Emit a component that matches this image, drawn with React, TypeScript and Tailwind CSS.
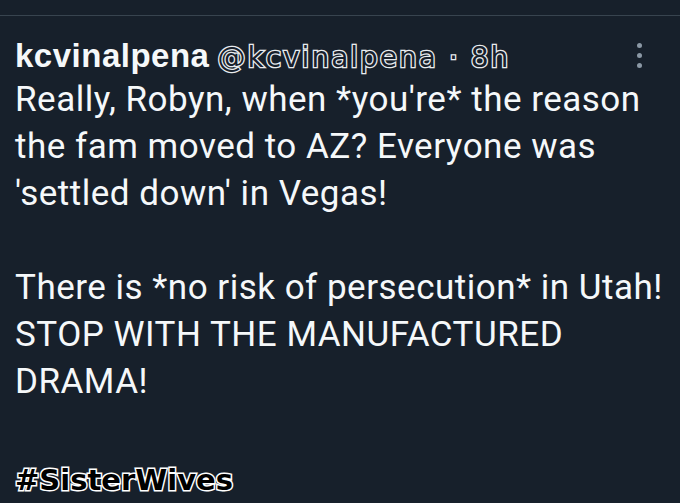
export default function App() {
  const lines = [
    "Really, Robyn, when *you're* the reason",
    'the fam moved to AZ? Everyone was',
    "'settled down' in Vegas!",
  ];
  const lines2 = [
    'There is *no risk of persecution* in Utah!',
    'STOP WITH THE MANUFACTURED',
    'DRAMA!',
  ];

  return (
    <div className="w-[680px] h-[503px] overflow-hidden bg-[#17202b] font-['Roboto',sans-serif] text-[#f5f8fa]">
      <div className="h-[15px]" />
      <div className="h-px bg-[#38444f]" />
      <div className="pl-[15px] pr-[38px]">
        {/* header row */}
        <div className="flex items-start pt-[23px] h-[60px]">
          <div className="flex items-baseline leading-[33px] whitespace-nowrap">
            <span className="font-['Liberation_Sans',sans-serif] text-[33px] font-bold tracking-[0.5px]">kcvinalpena</span>
            <span className="ml-[8px] font-['DejaVu_Sans',sans-serif] text-[28px] tracking-[2px] text-[#17202b] [-webkit-text-stroke:2.6px_#e8ecef] [paint-order:stroke_fill]">
              @kcvinalpena · 8h
            </span>
          </div>
          <div className="ml-auto mt-[4px] flex flex-col gap-[5px]">
            <span className="w-[5px] h-[5px] rounded-full bg-[#8b98a5]" />
            <span className="w-[5px] h-[5px] rounded-full bg-[#8b98a5]" />
            <span className="w-[5px] h-[5px] rounded-full bg-[#8b98a5]" />
          </div>
        </div>
        {/* tweet body */}
        <div className="text-[35px] leading-[47px] tracking-[0.5px] whitespace-nowrap">
          {lines.map((l) => (
            <div key={l}>{l}</div>
          ))}
          <div className="h-[47px]" />
          {lines2.map((l) => (
            <div key={l}>{l}</div>
          ))}
        </div>
        <div className="mt-[55px] font-['DejaVu_Sans',sans-serif] font-bold text-[29px] leading-[40px] text-black [-webkit-text-stroke:3px_#ffffff] [paint-order:stroke_fill]">
          #SisterWives
        </div>
      </div>
    </div>
  );
}
